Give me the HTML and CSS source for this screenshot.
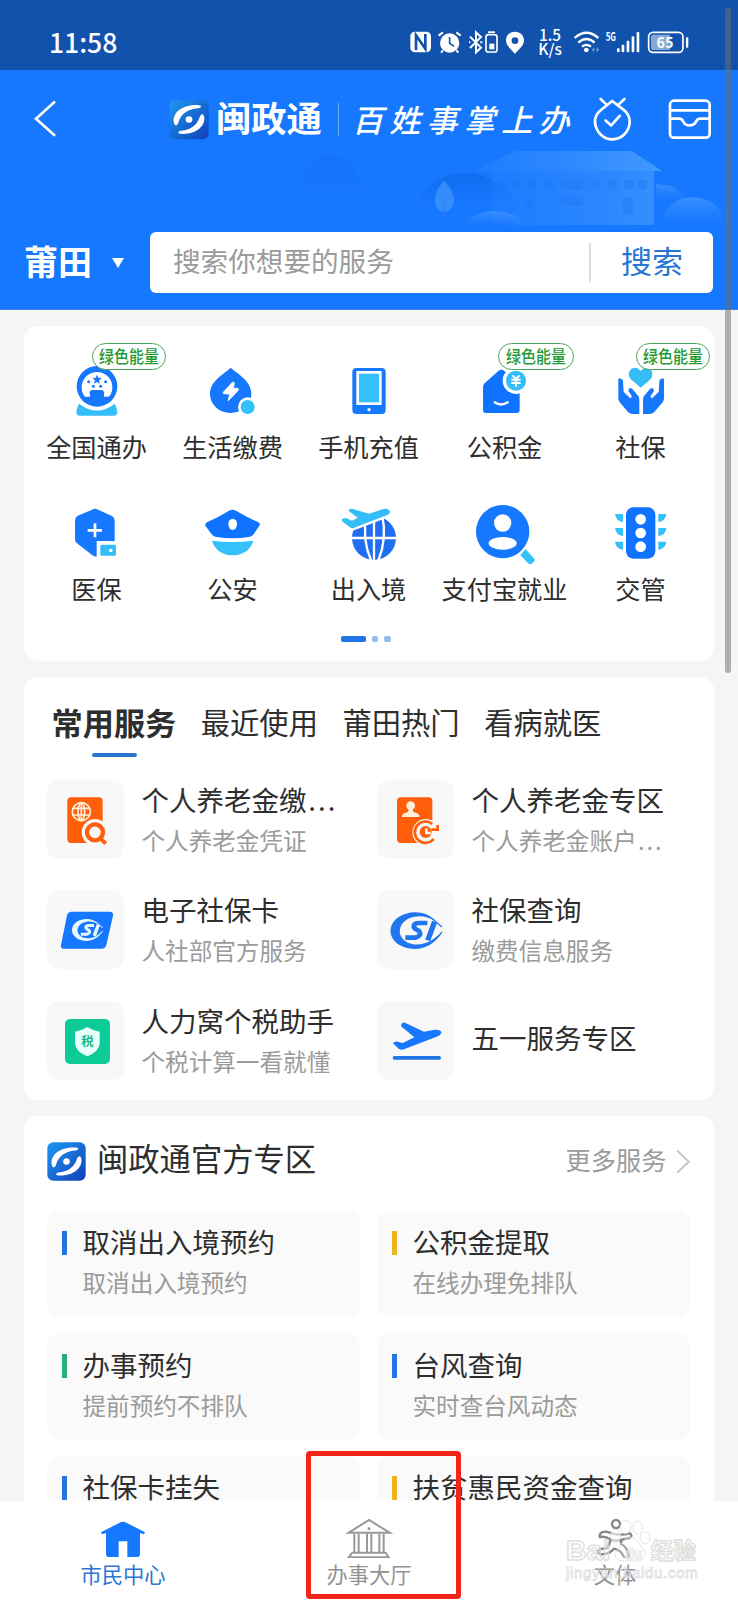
FILE: index.html
```html
<!DOCTYPE html>
<html lang="zh-CN">
<head>
<meta charset="utf-8">
<title>闽政通</title>
<link rel="stylesheet" href="styles.css">
</head>
<body>
<svg width="0" height="0" class="defs">
  <defs>
    <linearGradient id="logoBg" x1="0" y1="0" x2="1" y2="1"><stop offset="0" stop-color="#1c98f3"/><stop offset="1" stop-color="#1240b8"/></linearGradient>
    <linearGradient id="fade" x1="0" y1="0" x2="0" y2="1"><stop offset="0" stop-color="#5aa6ff" stop-opacity=".5"/><stop offset="1" stop-color="#3f93ff" stop-opacity="0"/></linearGradient>
    <linearGradient id="wall" x1="0" y1="0" x2="1" y2="0"><stop offset="0" stop-color="#4a9bff" stop-opacity=".15"/><stop offset="1" stop-color="#4fa3ff" stop-opacity=".75"/></linearGradient>
    <linearGradient id="hill" x1="0" y1="0" x2="0" y2="1"><stop offset="0" stop-color="#0d62e2" stop-opacity=".6"/><stop offset="1" stop-color="#1677ff" stop-opacity="0"/></linearGradient>
    <symbol id="logo" viewBox="0 0 120 120">
      <rect x="1" y="1" width="118" height="118" rx="18" fill="url(#logoBg)"/>
      <path d="M14 66C12 36 44 14 90 17C99 18 97 25 88 26C60 26 36 40 27 72C22 82 15 78 14 66Z" fill="#fff"/>
      <path d="M106 54C108 84 76 106 34 103C25 102 27 95 36 94C64 92 84 78 93 50C98 40 105 43 106 54Z" fill="#fff"/>
      <path d="M24 66C32 48 46 34 80 26L60 24L30 38Z M96 56C88 74 72 88 40 94L62 98L92 82Z" fill="#fff"/>
      <circle cx="60" cy="60" r="10" fill="#fff"/>
    </symbol>
  </defs>
</svg>
<div class="phone">
  <div class="status">
    <span class="clock">11:58</span>
    <svg class="status-icons" viewBox="120 80 850 90">
      <g fill="#fff">
        <rect x="124" y="94" width="62" height="62" rx="14"/>
        <path d="M141 149V105L169 145V101" fill="none" stroke="#1052ac" stroke-width="8"/>
        <circle cx="242" cy="128" r="29"/>
        <path d="M209 106L222 96M262 96L275 106M222 150L216 157M262 150L268 157" stroke="#fff" stroke-width="6"/>
        <path d="M242 110V129L255 138" fill="none" stroke="#1052ac" stroke-width="5"/>
        <path d="M303 109L336 142L321 156V96L336 110L303 143" fill="none" stroke="#fff" stroke-width="6"/>
        <path d="M300 126h4M334 126h6" stroke="#fff" stroke-width="6"/>
        <rect x="351" y="103" width="33" height="52" rx="7" fill="none" stroke="#fff" stroke-width="5"/>
        <rect x="357" y="93" width="21" height="5"/><rect x="361" y="130" width="15" height="17"/>
        <path fill-rule="evenodd" d="M438 94C422 94 411 105 411 120C411 137 428 148 438 161C448 148 465 137 465 120C465 105 454 94 438 94ZM438 111a10 10 0 1 1 0 20a10 10 0 1 1 0-20Z"/>
        <text x="543" y="121" class="net">1.5</text><text x="543" y="163" class="net">K/s</text>
        <path d="M617 113Q652 82 688 113M628 127Q652 105 677 127M639 139Q652 128 666 139" fill="none" stroke="#fff" stroke-width="7"/>
        <circle cx="652" cy="149" r="7"/>
        <path d="M676 141l-8 7 8 7zM683 141l8 7-8 7z" opacity=".45"/>
        <text x="710" y="122" class="gen">5G</text>
        <rect x="744" y="144" width="8" height="12" rx="3"/><rect x="758" y="133" width="8" height="23" rx="3"/><rect x="773" y="121" width="8" height="35" rx="3"/><rect x="788" y="108" width="8" height="48" rx="3"/><rect x="803" y="95" width="8" height="61" rx="3"/>
        <rect x="839" y="96" width="103" height="60" rx="13" fill="none" stroke="#fff" stroke-width="5"/>
        <rect x="846" y="103" width="58" height="46" rx="6" opacity=".5"/>
        <rect x="951" y="111" width="7" height="31" rx="3"/>
        <text x="888" y="143" class="pct">65</text>
      </g>
    </svg>
  </div>

  <header class="header">
    <svg class="scene" viewBox="270 145 470 85">
      <path d="M270 205Q300 200 305 170Q330 140 355 170Q370 195 400 205V225H270Z" fill="url(#hill)" opacity=".35"/>
      <path d="M408 220Q425 173 465 173Q500 173 530 220Z" fill="url(#hill)"/>
      <path d="M475 171L515 151H632L662 171Z" fill="url(#wall)"/>
      <path d="M491 171H654V225H491Z" fill="url(#wall)" opacity=".7"/>
      <g fill="#1c76ee" opacity=".35"><rect x="498" y="180" width="9" height="9"/><rect x="512" y="180" width="9" height="9"/><rect x="527" y="180" width="9" height="9"/><rect x="545" y="180" width="9" height="9"/><rect x="562" y="179" width="21" height="11"/><rect x="591" y="180" width="9" height="9"/><rect x="608" y="180" width="9" height="9"/><rect x="624" y="180" width="9" height="9"/><rect x="638" y="180" width="9" height="9"/><rect x="562" y="197" width="21" height="9"/><rect x="623" y="197" width="10" height="17"/><rect x="525" y="201" width="8" height="8"/></g>
      <path d="M656 184L672 186L683 194V202H656Z" fill="url(#fade)"/>
      <path d="M444 181C430 194 434 212 444 212C454 212 460 196 444 181Z" fill="#4b9fff" opacity=".6"/>
      <path d="M444 197V218" stroke="#2e82f0" stroke-width="1.2"/>
      <path d="M465 222Q490 202 520 218V225H465Z" fill="url(#fade)"/>
      <path d="M662 218Q670 197 695 197Q715 199 722 215V225H662Z" fill="url(#fade)"/>
    </svg>
    <div class="bar">
      <svg class="back" viewBox="99 299 70 114"><path d="M163 303L105 355L163 407" fill="none" stroke="#fff" stroke-width="8"/></svg>
      <svg class="logo"><use href="#logo"/></svg>
      <span class="brand">闽政通</span>
      <i class="brand-line"></i>
      <span class="slogan">百姓事掌上办</span>
      <svg class="hicon tomato" viewBox="668 288 124 140" fill="none" stroke="#fff" stroke-width="8" stroke-linecap="round" stroke-linejoin="round"><path d="M729 302L695 329Q676 344 677 366C679 396 703 418 730 418C758 418 781 395 782 365Q782 343 764 329ZM694 296L712 313M766 296L748 313"/><path d="M709 361L726 376L752 347"/></svg>
      <svg class="hicon inbox" viewBox="898 292 132 126" fill="none" stroke="#fff" stroke-width="8" stroke-linejoin="round"><rect x="904" y="300" width="119" height="111" rx="12"/><path d="M905 329H1022M905 354H932Q940 354 944 363Q949 374 963 374Q977 374 982 363Q986 354 994 354H1022"/></svg>
    </div>
    <div class="searchrow">
      <span class="city">莆田</span>
      <i class="tri"></i>
      <div class="search"><span class="ph">搜索你想要的服务</span><i class="sline"></i><span class="go">搜索</span></div>
    </div>
  </header>

  <main class="content">
    <section class="card grid-card">
      <div class="apps">
        <div class="app"><svg viewBox="195 147 192 192"><path d="M237 281Q291 322 344 281Q352 296 352 306Q352 317 342 317H239Q229 317 229 306Q229 296 237 281Z" fill="#34bdf8"/><circle cx="291" cy="229" r="68" fill="#fff"/><circle cx="291" cy="229" r="61" fill="#1677ff"/><path d="M253 258A46 46 0 1 1 329 258Q324 261 318 260H312Q310 253 313 247L307 240H274L268 247Q272 253 270 260H263Q257 262 253 258Z" fill="#fff"/><path d="M291 194l4 9 10 1-8 7 3 10-9-5-9 5 3-10-8-7 10-1z" fill="#1677ff"/><g fill="#1677ff"><circle cx="266" cy="215" r="4.500"/><circle cx="317" cy="215" r="4.500"/><circle cx="280" cy="229" r="4.500"/><circle cx="302" cy="229" r="4.500"/></g></svg><span class="label">全国通办</span><b class="badge"><em>绿色能量</em></b></div>
        <div class="app"><svg viewBox="603 147 192 192"><path d="M692 173C714 192 754 214 754 250C754 285 726 309 692 309C658 309 630 285 630 250C630 213 671 193 692 173Z" fill="#1677ff"/><path d="M698 216L670 247Q668 251 673 251L689 252L685 272L715 240Q717 236 712 235H700L703 219Z" fill="#fff" stroke="#fff" stroke-width="3" stroke-linejoin="round"/><circle cx="743" cy="291" r="29" fill="#fff"/><circle cx="743" cy="291" r="21" fill="#34c0fa"/></svg><span class="label">生活缴费</span></div>
        <div class="app"><svg viewBox="1011 147 192 192"><rect x="1057" y="174" width="100" height="138" rx="12" fill="#1677ff"/><path d="M1073 187H1141V281H1073Z" fill="#34c0fa" stroke="#fff" stroke-width="8"/><circle cx="1107" cy="299" r="5" fill="#fff"/></svg><span class="label">手机充值</span></div>
        <div class="app"><svg viewBox="312 147 192 192"><path d="M342 231Q342 225 347 220L388 183Q397 176 406 183L452 223V300Q452 309 443 309H351Q342 309 342 300Z" fill="#0f73ff"/><path d="M377 277Q396 290 416 277" fill="none" stroke="#fff" stroke-width="7" stroke-linecap="round"/><circle cx="441" cy="212" r="40" fill="#fff"/><circle cx="441" cy="212" r="30" fill="#34bdf8"/><path d="M431 196L441 207L452 196M427 209H455M427 219H455M441 207V230" fill="none" stroke="#fff" stroke-width="6"/></svg><span class="label">公积金</span><b class="badge wide"><em>绿色能量</em></b></div>
        <div class="app"><svg viewBox="720 147 192 192"><path d="M815 233L785 207C770 189 788 166 806 175Q811 180 815 183Q819 179 825 175C844 166 858 190 845 207Z" fill="#34bdf8"/><path id="hand" d="M748 209Q748 203 756 206Q762 208 762 214L764 246L784 265Q792 260 784 252L778 242Q780 229 790 237L808 258Q811 263 811 270V312H791Q783 312 777 306L752 277Q748 272 748 265Z" fill="#1677ff"/><use href="#hand" transform="translate(1633 0) scale(-1 1)"/></svg><span class="label">社保</span><b class="badge"><em>绿色能量</em></b></div>
        <div class="app"><svg viewBox="195 571 192 192"><path d="M276 597Q285 592 294 597L336 616Q344 621 344 630V738H290Q282 738 276 733L231 698Q225 694 225 685V630Q225 621 232 616Z" fill="#1677ff"/><path d="M285 638V680M263 659H306" stroke="#fff" stroke-width="8"/><path d="M290 691H352V742H290Z" fill="#fff"/><rect x="301" y="702" width="47" height="33" rx="4" fill="#34bdf8"/><rect x="328" y="715" width="9" height="9" fill="#fff"/></svg><span class="label">医保</span></div>
        <div class="app"><svg viewBox="603 571 192 192"><path d="M687 600Q698 594 708 600Q740 619 775 635Q781 639 779 644L761 671Q757 677 750 678Q698 688 646 678Q639 677 635 671L616 645Q615 639 621 635Q656 619 687 600Z" fill="#0f73ff"/><ellipse cx="698" cy="641" rx="13" ry="17" fill="#fff"/><path d="M636 690Q698 698 760 690C752 719 726 734 698 734C670 734 644 719 636 690Z" fill="#34c0fa"/></svg><span class="label">公安</span></div>
        <div class="app"><svg viewBox="1011 571 192 192"><circle cx="1122" cy="682" r="66" fill="#1f6ff0"/><path d="M1052 682H1192M1122 610V752M1100 612Q1084 682 1114 752M1146 612Q1163 682 1134 752" fill="none" stroke="#fff" stroke-width="7"/><path d="M1028 624Q1022 628 1029 634L1053 652Q1059 654 1066 650L1164 612Q1175 604 1166 597Q1160 593 1150 595L1107 609L1056 594Q1044 594 1047 602L1073 621L1056 630L1038 622Z" fill="#34bdf8" stroke="#fff" stroke-width="14" paint-order="stroke"/></svg><span class="label">出入境</span></div>
        <div class="app"><svg viewBox="312 571 192 192"><circle cx="401" cy="663" r="80" fill="#1677ff"/><circle cx="401" cy="637" r="26" fill="#fff"/><ellipse cx="401" cy="698" rx="42" ry="19" fill="#fff"/><path d="M469 715L496 744Q499 749 494 754Q489 762 480 760L454 734Z" fill="#34c0fa"/></svg><span class="label">支付宝就业</span></div>
        <div class="app"><svg viewBox="720 571 192 192"><g id="lamps" fill="#34c0fa"><path d="M738 610H762V634Q741 632 738 610ZM738 652H762V676Q741 674 738 652ZM738 693H762V717Q741 715 738 693Z"/></g><use href="#lamps" transform="translate(1630 0) scale(-1 1)"/><rect x="771" y="590" width="88" height="154" rx="22" fill="#0f73ff"/><circle cx="815" cy="626" r="16" fill="#fff"/><circle cx="815" cy="667" r="16" fill="#fff"/><circle cx="815" cy="708" r="16" fill="#fff"/></svg><span class="label">交管</span></div>
      </div>
      <div class="dots"><i class="on"></i><i></i><i></i></div>
    </section>

    <section class="card common">
      <nav class="tabs"><span class="tab active">常用服务</span><span class="tab">最近使用</span><span class="tab">莆田热门</span><span class="tab">看病就医</span></nav>
      <div class="services">
        <div class="svc"><svg class="tile" viewBox="141 328 231 237"><rect x="202" y="380" width="106" height="137" rx="11" fill="#ff5f0a"/><g fill="none" stroke="#ffeede" stroke-width="5"><circle cx="244" cy="423" r="27"/><ellipse cx="244" cy="423" rx="10" ry="27"/><path d="M244 396V450M219 413H269M219 433H269"/></g><circle cx="285" cy="485" r="40" fill="#f8f8f8"/><circle cx="285" cy="485" r="24" fill="none" stroke="#ff5f0a" stroke-width="13"/><path d="M299 501L317 519" stroke="#ff5f0a" stroke-width="12"/></svg><div class="txt"><h3>个人养老金缴<span lang="en" class="dotdot">...</span></h3><p>个人养老金凭证</p></div></div>
        <div class="svc"><svg class="tile" viewBox="25 328 231 237"><rect x="85" y="380" width="106" height="137" rx="11" fill="#ff5f0a"/><circle cx="126" cy="405" r="13" fill="#ffeede"/><path d="M121 412H131L134 424Q152 427 153 439H99Q100 427 118 424Z" fill="#ffeede"/><circle cx="171" cy="485" r="40" fill="#f8f8f8"/><path d="M191 460A32 32 0 1 0 195 505M207 463V477H188" fill="none" stroke="#ff5f0a" stroke-width="8"/><circle cx="171" cy="484" r="18" fill="#ff5f0a"/><path d="M173 473V487H186" fill="none" stroke="#fff" stroke-width="7"/></svg><div class="txt"><h3>个人养老金专区</h3><p>个人养老金账户<span lang="en" class="dotdot">...</span></p></div></div>
        <div class="svc"><svg class="tile" viewBox="141 661 231 237"><path d="M214 726H331Q341 727 339 738L319 826Q316 837 306 837H191Q181 837 183 826L201 737Q204 726 214 726Z" fill="#1677ff"/><g transform="translate(176.4 311.400) scale(.6)" fill="none" stroke="#e8f8ff"><path fill="#e8f8ff" stroke="none" fill-rule="evenodd" d="M222 771L202 754C177 727 127 717 90 742C54 767 60 807 94 827C133 848 189 840 222 787L218 786C195 815 153 834 118 819C83 802 88 765 117 748C145 735 175 738 198 755L217 773Z"/><path d="M176 760H152Q134 760 135 771Q137 778 151 784Q162 797 140 804H110" stroke-width="15"/><path d="M198 756L177 812" stroke-width="17"/></g></svg><div class="txt"><h3>电子社保卡</h3><p>人社部官方服务</p></div></div>
        <div class="svc"><svg class="tile" viewBox="25 661 231 237"><g fill="none" stroke="#1f76ee"><path fill="#1f76ee" stroke="none" d="M222 771L202 754C177 727 127 717 90 742C54 767 60 807 94 827C133 848 189 840 222 787L218 786C195 815 153 834 118 819C83 802 88 765 117 748C145 735 175 738 198 755L217 773Z"/><path d="M176 760H152Q134 760 135 771Q137 778 151 784Q162 797 140 804H110" stroke-width="14"/><path d="M198 756L177 812" stroke-width="16"/></g></svg><div class="txt"><h3>社保查询</h3><p>缴费信息服务</p></div></div>
        <div class="svc"><svg class="tile" viewBox="141 993 231 237"><rect x="195" y="1047" width="135" height="135" rx="15" fill="#0dcb97"/><path d="M262 1071Q280 1083 299 1085V1120Q298 1145 262 1159Q226 1145 225 1120V1085Q244 1083 262 1071Z" fill="#e9fffa"/><text x="262" y="1127" class="tax">税</text></svg><div class="txt"><h3>人力窝个税助手</h3><p>个税计算一看就懂</p></div></div>
        <div class="svc"><svg class="tile" viewBox="25 993 231 237"><path d="M73 1120Q77 1113 88 1115L102 1119L137 1102L97 1069Q98 1056 109 1058L166 1085L193 1080Q216 1077 218 1087Q217 1096 202 1101L108 1137Q98 1142 90 1136Z" fill="#1677ff"/><rect x="72" y="1158" width="145" height="11" rx="5" fill="#1f76e6"/></svg><div class="txt single"><h3>五一服务专区</h3></div></div>
      </div>
    </section>

    <section class="card official">
      <div class="off-head"><svg class="off-logo"><use href="#logo"/></svg><h2>闽政通官方专区</h2><span class="more">更多服务</span><svg class="chev" viewBox="922 148 44 76"><path d="M926 153L960 186L926 219" fill="none" stroke="#c4c4c4" stroke-width="6"/></svg></div>
      <div class="boxes">
        <div class="box"><i class="mark blue"></i><div><h3>取消出入境预约</h3><p>取消出入境预约</p></div></div>
        <div class="box"><i class="mark gold"></i><div><h3>公积金提取</h3><p>在线办理免排队</p></div></div>
        <div class="box"><i class="mark green"></i><div><h3>办事预约</h3><p>提前预约不排队</p></div></div>
        <div class="box"><i class="mark blue"></i><div><h3>台风查询</h3><p>实时查台风动态</p></div></div>
        <div class="box"><i class="mark blue"></i><div><h3>社保卡挂失</h3></div></div>
        <div class="box"><i class="mark gold"></i><div><h3>扶贫惠民资金查询</h3></div></div>
      </div>
    </section>
  </main>

  <footer class="tabbar">
    <div class="ti on"><svg viewBox="297 234 144 120"><path d="M303 277L359 248Q369 243 379 248L435 277L432 283L420 279V341Q420 351 410 351H382V304H356V351H328Q318 351 318 341V279L306 283Z" fill="#1677ff"/></svg><span>市民中心</span></div>
    <div class="ti"><svg viewBox="1035 234 144 120" fill="none" stroke="#989898" stroke-width="6"><path d="M1046 278L1107 240L1169 278Z"/><path d="M1063 282V337M1076 282V337M1101 282V337M1114 282V337M1138 282V337M1151 282V337M1057 338H1157L1166 352H1046Z"/><path d="M1103 266H1111" stroke-width="8"/></svg><span>办事大厅</span></div>
    <div class="ti"><svg viewBox="666 234 144 120" fill="none" stroke="#868686" stroke-width="7" stroke-linejoin="round"><circle cx="741" cy="252" r="12"/><path d="M692 291C690 275 708 272 722 278Q748 289 783 280Q792 287 782 294L755 300Q740 304 724 298Q710 288 692 291Z"/><path d="M724 300Q722 318 712 325L693 327Q683 333 691 342Q718 346 735 326Q757 331 764 350Q774 361 779 348Q777 322 756 312L758 300"/></svg><span>文体</span></div>
  </footer>

  <svg class="watermark" viewBox="580 235 420 205">
    <g class="wm-big"><text x="592" y="362" textLength="133" lengthAdjust="spacingAndGlyphs">Bai</text><text x="768" y="357" class="wm-du">du</text><text x="846" y="357" class="wm-cn" textLength="136">经验</text></g>
    <g fill="#fff" fill-opacity=".75" stroke="#ddd" stroke-width="3"><ellipse cx="741" cy="289" rx="15" ry="20"/><ellipse cx="771" cy="262" rx="15" ry="20"/><ellipse cx="807" cy="264" rx="14" ry="19"/><ellipse cx="829" cy="295" rx="15" ry="18"/><path d="M783 292C764 294 758 318 745 332C729 358 755 369 783 362C813 370 838 358 827 332C811 315 805 292 783 292Z" fill-opacity=".35"/></g>
    <text x="592" y="415" class="wm-url" textLength="395">jingyan.baidu.com</text>
  </svg>
  <div class="highlight"></div>
  <div class="scrollbar"></div>
</div>
</body>
</html>
```

FILE: styles.css
```css
* { box-sizing: border-box; margin: 0; padding: 0; }
body { width: 738px; height: 1600px; overflow: hidden; background: #f5f5f5; font-family: "Noto Sans CJK SC", "Noto Sans", sans-serif; color: #2e2e2e; }
h2, h3 { font-weight: 400; }
i, em, b { display: block; font-style: normal; font-weight: 400; }
svg { display: block; flex: none; }
.defs { position: absolute; }
.phone { position: relative; width: 738px; height: 1600px; overflow: hidden; display: flex; flex-direction: column; }

.status { height: 70px; flex: none; background: #1052ac; display: flex; justify-content: space-between; padding: 0 46px 0 49px; }
.clock { color: #fff; font-size: 26.5px; font-weight: 500; line-height: 30px; padding-top: 26.500px; }
.status-icons { width: 283.3px; height: 30px; margin-top: 26.7px; margin-right: -.6px; overflow: visible; }
.net { font: 500 46px "Noto Sans CJK SC", sans-serif; text-anchor: middle; }
.gen { font: 700 34px "Noto Sans CJK SC", sans-serif; transform: translateX(213px) scaleX(.7); }
.pct { font: 700 43px "Noto Sans CJK SC", sans-serif; text-anchor: middle; }

.header { position: relative; height: 240px; flex: none; background: #1677ff; border-bottom: 1px solid #4284d8; }
.scene { position: absolute; left: 270px; top: 75px; width: 470px; height: 85px; }
.bar { position: relative; display: flex; align-items: center; height: 98px; padding-left: 34px; }
.back { width: 23px; height: 38px; margin-top: -1px; }
.logo { width: 40px; height: 41px; margin-left: 112px; }
.brand { margin-left: 7px; width: 106px; font-size: 35.3px; font-weight: 700; line-height: 50px; color: #fff; margin-top: -4px; }
.brand-line { width: 1px; height: 33px; background: #6eabff; margin-left: 16px; }
.slogan { margin-left: 13px; width: 229px; font-size: 31px; font-style: italic; font-weight: 500; letter-spacing: 6.3px; line-height: 40px; white-space: nowrap; color: #fff; }
.hicon.tomato { width: 41px; height: 47px; margin-left: 10.500px; }
.hicon.inbox { width: 44px; height: 42px; margin-left: 35.5px; }
.searchrow { position: relative; display: flex; align-items: center; height: 61px; margin-top: 64px; padding-left: 24px; }
.city { width: 69px; font-size: 34px; font-weight: 700; line-height: 50px; color: #fff; margin-top: -3px; }
.tri { margin-left: 18.500px; margin-top: 1px; border: 6.5px solid transparent; border-top: 10px solid #fff; border-bottom: 0; }
.search { display: flex; align-items: center; margin-left: 26px; width: 563.5px; height: 61px; border-radius: 6px; background: #fff; padding-left: 23.500px; }
.ph { width: 416px; font-size: 27.6px; line-height: 40px; color: #9b9b9b; margin-top: -5px; }
.sline { width: 2px; height: 39px; background: #dcdcdc; }
.go { margin-left: 30px; font-size: 31px; line-height: 40px; color: #2875d2; margin-top: -5px; }

.content { flex: 1; min-height: 0; overflow: hidden; padding: 16px 24px 0; display: flex; flex-direction: column; gap: 16px; }
.card { flex: none; width: 689.5px; background: #fff; border-radius: 14px; }
.grid-card { height: 335px; padding: 33px 4.500px 0; }
.apps { display: grid; grid-template-columns: repeat(5, 136px); row-gap: 37.8px; }
.app { position: relative; height: 104px; display: flex; flex-direction: column; align-items: center; gap: 8px; }
.app svg { width: 64px; height: 64px; }
.label { font-size: 25.2px; line-height: 30px; white-space: nowrap; }
.badge { position: absolute; left: 63px; top: -16.500px; width: 74px; height: 27px; border: 1px solid #47a55a; border-radius: 14px; background: #fff; color: #239a35; display: flex; justify-content: center; }
.badge.wide { left: 61.500px; width: 76px; }
.badge em { font-size: 17px; font-weight: 500; line-height: 24px; white-space: nowrap; transform: scaleX(.88); }
.dots { display: flex; gap: 6px; margin: 31px 0 0 312.5px; }
.dots i { width: 6.5px; height: 6px; border-radius: 2px; background: #94bbe9; }
.dots .on { width: 24.500px; background: #2175e6; }

.common { height: 423px; padding: 24px 23px 0; }
.tabs { display: flex; gap: 24.500px; height: 56px; padding-left: 4.500px; }
.tab { position: relative; font-size: 29.3px; line-height: 42px; white-space: nowrap; }
.tab:not(.active) { margin-top: -1px; }
.tab.active { font-size: 31.2px; font-weight: 700; }
.tab.active::after { content: ""; position: absolute; left: 40.500px; top: 52px; width: 45px; height: 4px; border-radius: 2px; background: #2a76cf; }
.services { display: grid; grid-template-columns: 330px 313px; grid-auto-rows: 82px; row-gap: 28.800px; margin-top: 22.500px; }
.svc { display: flex; align-items: flex-start; }
.tile { width: 77px; height: 79px; border-radius: 12px; background: #f8f8f8; }
.tax { font: 700 37px "Noto Sans CJK SC", sans-serif; text-anchor: middle; fill: #19b98b; }
.txt { margin-left: 17.500px; margin-top: -1px; }
.dotdot { letter-spacing: .08em; padding-left: .06em; }
h3 { font-size: 27.5px; line-height: 41px; white-space: nowrap; }
.svc p, .box p { font-size: 23.600px; line-height: 41px; color: #9b9b9b; white-space: nowrap; }
.txt.single { margin-top: 16px; }

.official { height: 600px; padding: 25px 23px 0; }
.off-head { display: flex; align-items: center; height: 41px; }
.off-logo { width: 39px; height: 39px; margin-top: 0; }
h2 { margin-left: 11px; font-size: 31.3px; line-height: 40px; flex: 1; margin-top: -7px; }
.more { font-size: 25.2px; color: #9b9b9b; line-height: 40px; margin-top: -5px; }
.chev { width: 14.7px; height: 25.300px; margin: 1px 0 0 9.500px; }
.boxes { display: grid; grid-template-columns: 313px 313px; column-gap: 17px; grid-auto-rows: 106.5px; row-gap: 16.200px; margin-top: 28.500px; }
.box { display: flex; background: #fafafa; border-radius: 12px; padding: 10.500px 0 0 15px; }
.mark { width: 5px; height: 24px; margin: 10px 15.500px 0 0; }
.mark.blue { background: #2575e0; }
.mark.gold { background: #ebb51d; }
.mark.green { background: #28ae76; }

.tabbar { position: relative; height: 99px; flex: none; background: #fff; display: flex; padding-top: 17px; }
.ti { width: 246px; display: flex; flex-direction: column; align-items: center; gap: 3px; color: #929292; }
.ti svg { width: 48px; height: 40px; }
.ti span { font-size: 21.300px; line-height: 26px; }
.ti.on { color: #2a76d2; }

.watermark { position: absolute; left: 562.3px; top: 1518.3px; width: 140px; height: 68.3px; opacity: .8; }
.wm-big text { font: 700 82px "Liberation Sans", sans-serif; fill: #fff; fill-opacity: .5; stroke: #d8d8d8; stroke-width: 4; }
.wm-big .wm-du { font-size: 42px; }
.wm-big .wm-cn { font: 700 68px "Noto Sans CJK SC", sans-serif; }
.wm-url { font: 400 45px "Liberation Sans", sans-serif; fill: #fff; fill-opacity: .8; stroke: #d8d8d8; stroke-width: 2.500; }
.highlight { position: absolute; left: 305.5px; top: 1451px; width: 155.5px; height: 148px; border: 5.500px solid #f5241a; border-radius: 4px; }
.scrollbar { position: absolute; left: 725px; top: 7px; width: 6px; height: 666px; border-radius: 3px; background: rgba(112,112,112,.52); }
```
